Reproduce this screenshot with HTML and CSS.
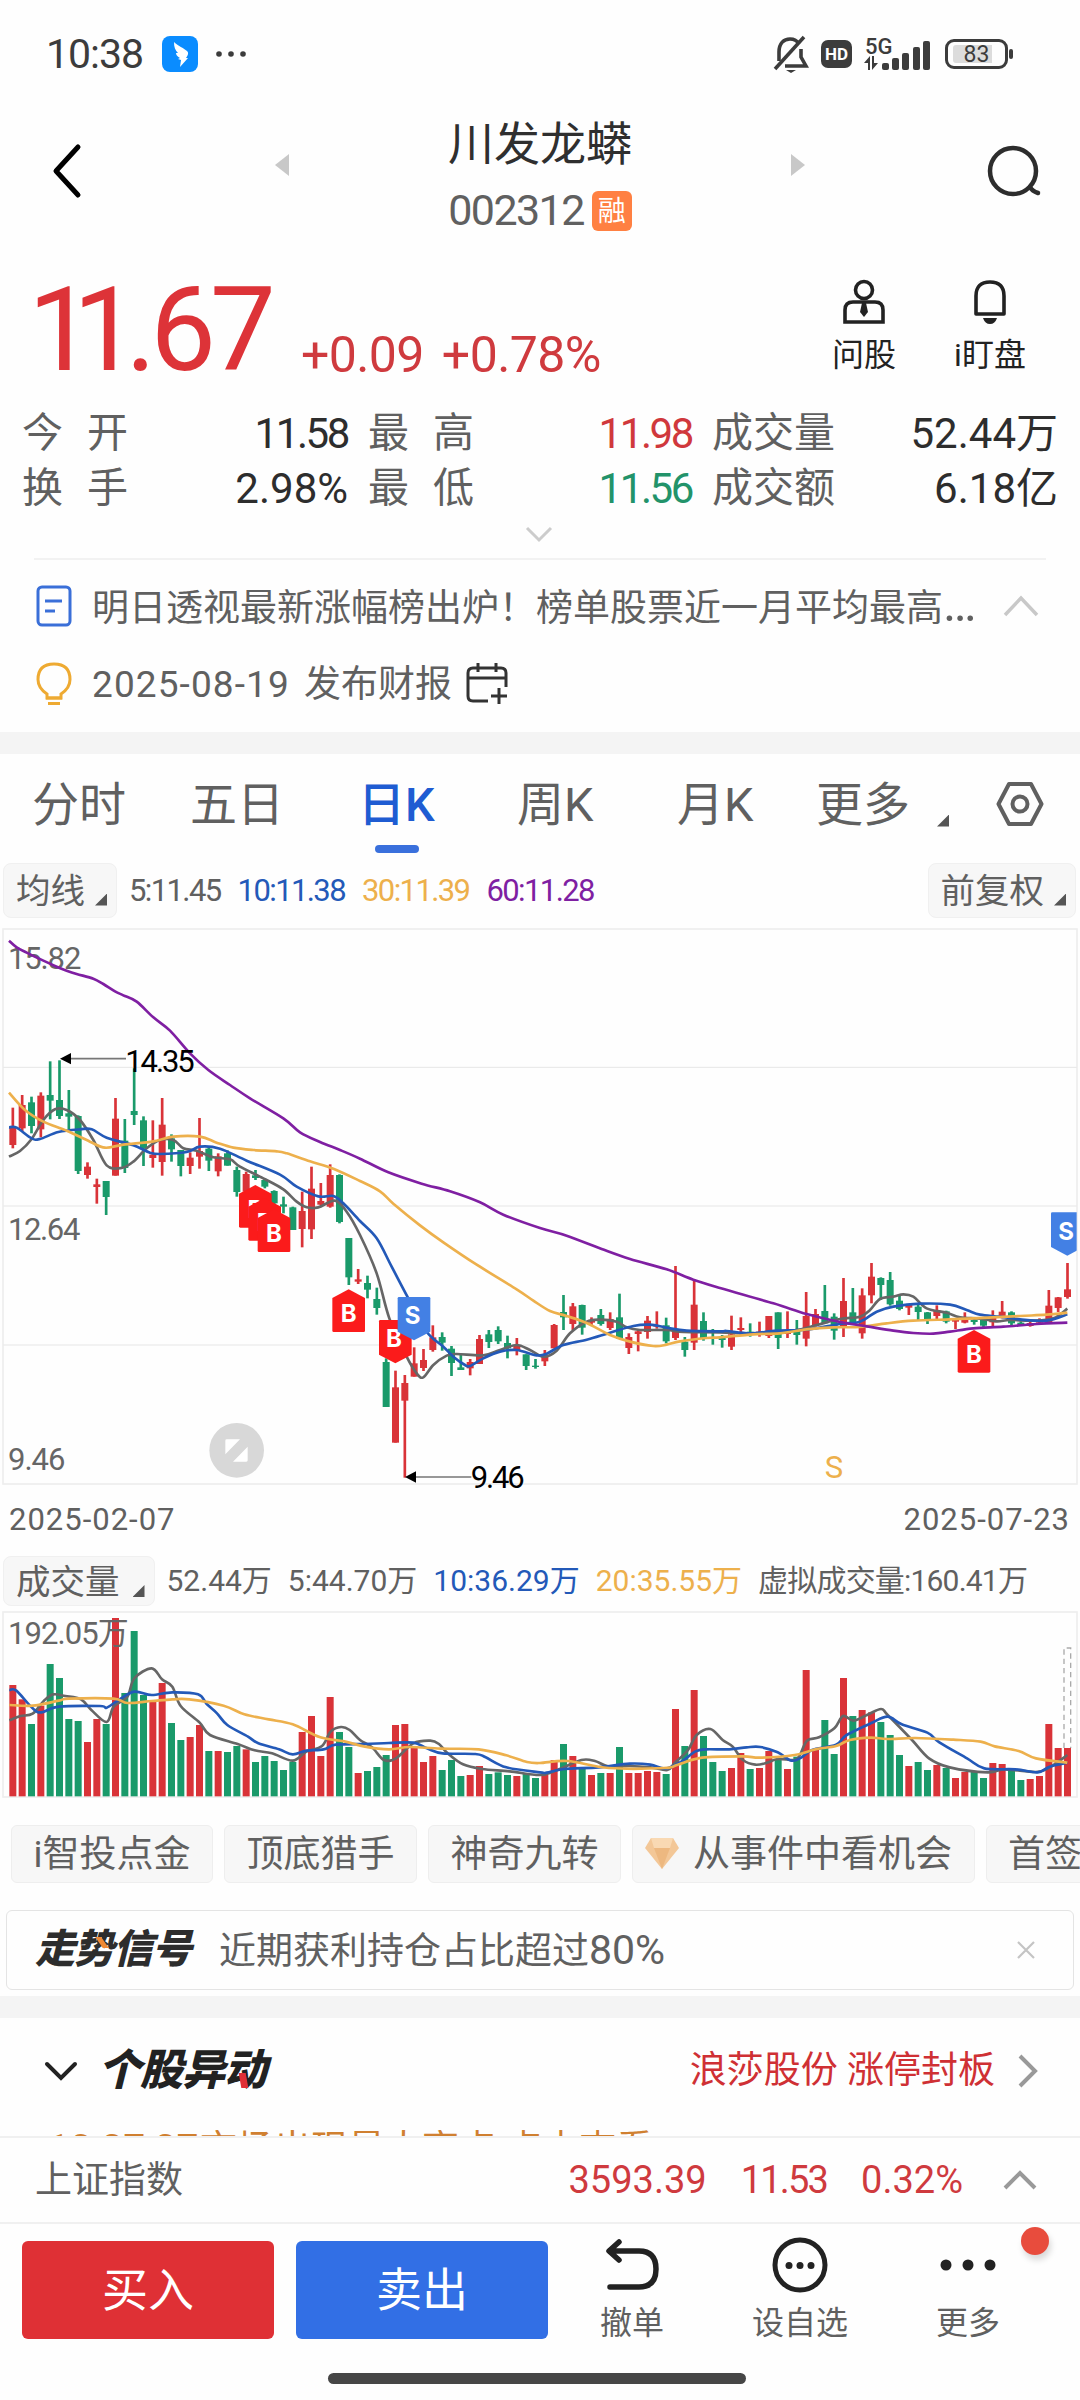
FILE: index.html
```html
<!DOCTYPE html>
<html lang="zh-CN">
<head>
  <meta charset="UTF-8">
  <meta name="viewport" content="width=device-width, initial-scale=1.0">
  <title>川发龙蟒 002312</title>
  <link rel="stylesheet" href="styles.css">
</head>
<body>

  <div class="status-bar">
    <span class="clock">10:38</span>
    <svg class="app-icon" width="36" height="36" viewBox="0 0 36 36">
      <rect width="36" height="36" rx="8" fill="#0a8cff"/>
      <path d="M12 6c3 3 11 7 13 9 2 2 1 4-1 7l2 0-8 9 1-7-3-1 2-1c-3-2-4-3-4-5l2 0c-3-3-4-6-4-11z" fill="#fff"/>
    </svg>
    <svg class="dots" width="32" height="8" viewBox="0 0 32 8" fill="#3c3c3c"><circle cx="4" cy="4" r="2.8"/><circle cx="16" cy="4" r="2.8"/><circle cx="28" cy="4" r="2.8"/></svg>
    <div class="status-right">
      <svg width="36" height="40" viewBox="0 0 36 40" fill="none" stroke="#3c3c3c" stroke-width="3.6">
        <path d="M6 27V18C6 9 11 5 17 5c4 0 7 1.500 9 5M28 15v8l5 9H12"/>
        <path d="M2 35L31 3"/><path d="M13 36h10l-5 3z" fill="#3c3c3c" stroke="none"/>
      </svg>
      <span class="hd">HD</span>
      <svg class="signal" width="68" height="36" viewBox="0 0 68 36" fill="#3c3c3c">
        <text x="1" y="18" class="five-g">5G</text>
        <path d="M4 34V27H0L6 20V34zM8 20h2v7h4L8 34z"/>
        <rect x="18" y="27" width="7" height="7" rx="2"/><rect x="28" y="22" width="7" height="12" rx="2"/><rect x="38" y="17" width="7" height="17" rx="2"/><rect x="49" y="11" width="7" height="23" rx="2"/><rect x="59" y="5" width="7" height="29" rx="2"/>
      </svg>
      <span class="battery"><i>83</i></span>
    </div>
  </div>

  <div class="title-bar">
    <svg class="back" width="30" height="56" viewBox="0 0 30 56" fill="none" stroke="#000" stroke-width="5" stroke-linecap="round" stroke-linejoin="round"><path d="M26 4L4 28l22 24"/></svg>
    <svg class="prev" width="14" height="22" viewBox="0 0 14 22"><path d="M14 0v22L0 11z" fill="#c8c8c8"/></svg>
    <div class="stock">
      <div class="stock-name">川发龙蟒</div>
      <div class="stock-code">002312<span class="tag">融</span></div>
    </div>
    <svg class="next" width="14" height="22" viewBox="0 0 14 22"><path d="M0 0v22l14-11z" fill="#c8c8c8"/></svg>
    <svg class="search" width="58" height="56" viewBox="0 0 58 56" fill="none" stroke="#2d2d2d" stroke-width="4.500" stroke-linecap="round"><circle cx="27" cy="27" r="23"/><path d="M44 43q2 4 8 6"/></svg>
  </div>

  <div class="price-row">
    <span class="price"><i>11</i>.67</span>
    <span class="change">+0.09</span>
    <span class="change">+0.78%</span>
    <div class="action ask">
      <svg width="44" height="46" viewBox="0 0 44 46" fill="none" stroke="#222" stroke-width="3.600"><circle cx="22" cy="11" r="8.500"/><path d="M3 43V31q0-8 8-8h22q8 0 8 8v12z"/><path d="M20 24h4l2 9-4 5-4-5z" fill="#222" stroke="none"/></svg>
      <span>问股</span>
    </div>
    <div class="action">
      <svg width="36" height="46" viewBox="0 0 36 46" fill="none" stroke="#222" stroke-width="3.600"><path d="M4 35V17q0-14 14-14t14 14v18z" stroke-linejoin="round"/><path d="M11 39h14q-2 6-7 6t-7-6z" fill="#222" stroke="none"/></svg>
      <span>i盯盘</span>
    </div>
  </div>

  <div class="quote">
    <span class="wide">今开</span><b class="n11">11.58</b>
    <span class="wide mid">最高</span><b class="up n11">11.98</b>
    <span class="last">成交量</span><b>52.44万</b>
    <span class="wide">换手</span><b>2.98%</b>
    <span class="wide mid">最低</span><b class="down n11">11.56</b>
    <span class="last">成交额</span><b>6.18亿</b>
  </div>
  <div class="expand">
    <svg width="28" height="18" viewBox="0 0 28 18" fill="none" stroke="#ccc" stroke-width="3"><path d="M2 2l12 12L26 2"/></svg>
  </div>

  <div class="news">
    <div class="news-row">
      <svg width="36" height="42" viewBox="0 0 36 42" fill="none" stroke="#3a6fd8" stroke-width="3"><rect x="2" y="2" width="32" height="38" rx="4"/><path d="M9 16h17M9 26h10"/></svg>
      <span class="headline">明日透视最新涨幅榜出炉！榜单股票近一月平均最高<i>…</i></span>
      <svg class="fold" width="36" height="22" viewBox="0 0 36 22" fill="none" stroke="#c8c8c8" stroke-width="3.500"><path d="M2 20L18 3l16 17"/></svg>
    </div>
    <div class="news-row">
      <svg width="36" height="44" viewBox="0 0 36 44" fill="none" stroke="#eeaa32" stroke-width="3"><path d="M11 36v-4Q2 26 2 17.500 2 2 18 2t16 15.500Q34 26 25 32v4z"/><path d="M10 36h16M12 41.500h12"/></svg>
      <span class="report">2025-08-19</span>
      <span>发布财报</span>
      <svg class="calendar" width="42" height="42" viewBox="0 0 42 42" fill="none" stroke="#333" stroke-width="3"><path d="M22 38H7q-5 0-5-5V10q0-5 5-5h28q5 0 5 5v14M2 15h38M12 0v9M30 0v9M33 25v16M25 33h16"/></svg>
    </div>
  </div>

  <div class="gap"></div>

  <div class="tabs">
    <span>分时</span>
    <span>五日</span>
    <span class="active">日K</span>
    <span>周K</span>
    <span>月K</span>
    <span class="more">更多<i class="corner"></i></span>
    <svg width="48" height="46" viewBox="0 0 48 46" fill="none" stroke="#606060" stroke-width="4"><path d="M13 3h22l10.500 20L35 43H13L2.500 23z" stroke-linejoin="round"/><circle cx="24" cy="23" r="7.500"/></svg>
  </div>

  <div class="legend ma">
    <span class="chip">均线<i class="corner"></i></span>
    <span class="g">5:11.45</span>
    <span class="b">10:11.38</span>
    <span class="o">30:11.39</span>
    <span class="p">60:11.28</span>
    <span class="chip right">前复权<i class="corner"></i></span>
  </div>

  <!-- three svg units to one pixel, origin at the chart's top margin -->
  <svg class="kline" id="kline" width="1080" height="572" viewBox="0 24 3240 1716"></svg>
  <div class="dates"><span>2025-02-07</span><span>2025-07-23</span></div>

  <div class="legend vol">
    <span class="chip">成交量<i class="corner"></i></span>
    <span class="g">52.44万</span>
    <span class="g">5:44.70万</span>
    <span class="b">10:36.29万</span>
    <span class="o">20:35.55万</span>
    <span class="g virtual">虚拟成交量:160.41万</span>
  </div>
  <svg class="volume" id="volume" width="1080" height="190" viewBox="0 210 3240 570"></svg>

  <div class="pills">
    <span>i智投点金</span>
    <span>顶底猎手</span>
    <span>神奇九转</span>
    <span class="gem"><svg width="34" height="31" viewBox="0 0 34 31"><path d="M6 0h22l6 10-17 21L0 10z" fill="#f3c797"/><path d="M6 0h22l-3 10H9z" fill="#f9d9b3"/><path d="M9 10h16l-8 21z" fill="#edb880"/></svg>从事件中看机会</span>
    <span>首签</span>
  </div>

  <div class="signal-card">
    <span class="logo">走势信号</span>
    <span>近期获利持仓占比超过<i>80%</i></span>
    <svg width="18" height="18" viewBox="0 0 18 18" stroke="#c4c4c4" stroke-width="2.200"><path d="M1 1l16 16M17 1L1 17"/></svg>
  </div>

  <div class="gap"></div>

  <div class="moves">
    <svg width="34" height="20" viewBox="0 0 34 20" fill="none" stroke="#222" stroke-width="4" stroke-linecap="round"><path d="M3 3l14 14L31 3"/></svg>
    <span class="logo red">个股异动</span>
    <span class="hot">浪莎股份 涨停封板</span>
    <svg width="20" height="34" viewBox="0 0 20 34" fill="none" stroke="#999" stroke-width="4"><path d="M2 2l15 15L2 32"/></svg>
  </div>
  <div class="ticker"><b>10:37:37</b><span>市场出现最大亮点 点击查看</span> <em>&gt;&gt;</em></div>

  <div class="index-bar">
    <span>上证指数</span>
    <b class="i1">3593.39</b><b class="i2">11.53</b><b class="i3">0.32%</b>
    <svg width="34" height="20" viewBox="0 0 34 20" fill="none" stroke="#999" stroke-width="4"><path d="M2 18L17 3l15 15"/></svg>
  </div>

  <div class="toolbar">
    <button class="buy">买入</button>
    <button class="sell">卖出</button>
    <div class="tool">
      <svg width="56" height="56" viewBox="0 0 56 56" fill="none" stroke="#222" stroke-width="5.500" stroke-linecap="round" stroke-linejoin="round"><path d="M15 5L5 14l10 9M6 14h29q17 0 17 18t-17 18H6"/></svg>
      <span>撤单</span>
    </div>
    <div class="tool">
      <svg width="56" height="56" viewBox="0 0 56 56"><circle cx="28" cy="28" r="25" fill="none" stroke="#222" stroke-width="5"/><g fill="#222"><circle cx="17" cy="28.500" r="3.500"/><circle cx="28" cy="28.500" r="3.500"/><circle cx="39" cy="28.500" r="3.500"/></g></svg>
      <span>设自选</span>
    </div>
    <div class="tool">
      <svg width="56" height="56" viewBox="0 0 56 56" fill="#222"><circle cx="6" cy="28" r="5.500"/><circle cx="28" cy="28" r="5.500"/><circle cx="50" cy="28" r="5.500"/></svg>
      <span>更多</span>
      <i class="badge"></i>
    </div>
  </div>
  <div class="home-bar"></div>

  <script src="script.js"></script>
</body>
</html>
```
FILE: styles.css
```css
* {
  box-sizing: border-box;
}

body {
  margin: 0;
  width: 1080px;
  height: 2400px;
  overflow: hidden;
  background-color: #fefefe;
  color: #606060;
  font-family: Roboto, "Noto Sans CJK SC", sans-serif;
  font-size: 37px;
  line-height: 1;
  white-space: nowrap;
}

svg {
  display: block;
  flex: none;
}

i, em {
  font-style: normal;
}

b {
  font-weight: normal;
}

/* status bar */
.status-bar {
  height: 108px;
  padding: 0 72px 0 46px;
  display: flex;
  align-items: center;
  color: #3c3c3c;
}

.clock {
  width: 116px;
  font-size: 41px;
  letter-spacing: -1px;
}

.dots {
  margin-left: 17px;
}

.status-right {
  margin-left: auto;
  display: flex;
  align-items: center;
}

.hd {
  width: 31px;
  height: 28px;
  margin-left: 12px;
  border-radius: 7px;
  background-color: #3c3c3c;
  color: #fff;
  font: bold 17px/28px Roboto, sans-serif;
  text-align: center;
}

.signal {
  margin-left: 12px;
}

.five-g {
  font: 500 22px Roboto, sans-serif;
}

.battery {
  position: relative;
  width: 63px;
  height: 30px;
  margin-left: 13px;
  padding: 3px 5px;
  border: 3px solid #3c3c3c;
  border-radius: 9px;
}

.battery::after {
  content: "";
  position: absolute;
  right: -8px;
  top: 7px;
  width: 4px;
  height: 10px;
  border-radius: 2px;
  background-color: #3c3c3c;
}

.battery i {
  display: block;
  height: 18px;
  border-radius: 3px;
  background: linear-gradient(to right, #dcdcdc 83%, #fefefe 83%);
  font-size: 23px;
  line-height: 19px;
  text-align: center;
}

/* title */
.title-bar {
  height: 152px;
  display: flex;
  align-items: flex-start;
}

.back {
  margin: 35px 0 0 52px;
}

.prev {
  margin: 46px 0 0 193px;
}

.stock {
  width: 502px;
  padding-top: 13px;
  text-align: center;
}

.stock-name {
  color: #2f2f2f;
  font-size: 46px;
}

.stock-code {
  margin-top: 22px;
  display: flex;
  justify-content: center;
  align-items: center;
  font-size: 43px;
  letter-spacing: -1.6px;
}

.tag {
  width: 40px;
  height: 40px;
  margin-left: 8px;
  border-radius: 6px;
  background-color: #ff8042;
  color: #fff;
  font-size: 28px;
  line-height: 41px;
  letter-spacing: 0;
}

.next {
  margin-top: 46px;
}

.search {
  margin: 36px 0 0 181px;
}

/* price */
.price-row {
  height: 140px;
  padding: 14px 35px 0 34px;
  display: flex;
  color: #cf3a3e;
}

.price {
  width: 267px;
  margin-top: -2px;
  color: #dd3338;
  font-size: 117px;
  letter-spacing: -6px;
}

.price i {
  margin: 0 8px 0 -6px;
  letter-spacing: -21px;
}

.change {
  margin: 56px 18px 0 0;
  font-size: 50px;
  line-height: 50px;
  letter-spacing: -0.6px;
}

.action {
  width: 110px;
  padding-top: 5px;
  display: flex;
  flex-direction: column;
  align-items: center;
  gap: 14px;
  color: #222;
  font-size: 32px;
}

.ask {
  margin-left: auto;
  margin-right: 16px;
}

/* quote table */
.quote {
  height: 110px;
  margin-top: 6px;
  padding: 0 22px;
  display: grid;
  grid-template-columns: 102px 224px 125px 219px 142px 224px;
  grid-template-rows: 55px 55px;
  align-items: center;
  font-size: 41px;
}

.quote .wide {
  letter-spacing: 24px;
}

.quote .mid {
  margin-left: 20px;
}

.quote .last {
  margin-left: 20px;
}

.quote b {
  color: #2d2d2d;
  font-size: 42px;
  text-align: right;
}

.quote .n11 {
  letter-spacing: -2.4px;
}

.quote .up {
  color: #d0383c;
}

.quote .down {
  color: #22936a;
}

.expand {
  height: 44px;
  margin: 0 34px;
  padding: 10px 0 0 491px;
  border-bottom: 2px solid #f2f2f2;
}

/* news */
.news {
  height: 172px;
  padding: 7px 36px 0;
}

.news-row {
  height: 78px;
  display: flex;
  align-items: center;
}

.headline {
  width: 890px;
  margin-left: 20px;
}

.headline i {
  letter-spacing: 2px;
  font-size: 50px;
  line-height: 37px;
}

.fold {
  margin-left: auto;
  margin-right: 5px;
}

.report {
  width: 212px;
  margin-left: 20px;
  letter-spacing: 1.1px;
}

.calendar {
  margin-left: 14px;
}

.gap {
  height: 22px;
  background-color: #f4f4f4;
}

/* period tabs */
.tabs {
  height: 108px;
  padding: 0 0 8px 32px;
  display: grid;
  grid-template-columns: 158px 168px 159px 160px 139px 180px 48px;
  align-items: center;
  font-size: 47px;
}

.tabs .active {
  position: relative;
  color: #1f5cd2;
  font-weight: 500;
}

.tabs .active::after {
  content: "";
  position: absolute;
  left: 17px;
  bottom: -25px;
  width: 44px;
  height: 8px;
  border-radius: 4px;
  background-color: #3a70dc;
}

.corner {
  display: inline-block;
  width: 12px;
  height: 12px;
  margin-left: 10px;
  background-color: #555;
  clip-path: polygon(100% 0, 100% 100%, 0 100%);
}

.tabs .corner {
  margin-left: 27px;
  margin-bottom: -6px;
}

.legend {
  display: flex;
  align-items: center;
  font-size: 31px;
}

.ma {
  height: 55px;
  padding: 1px 4px 0 3px;
  letter-spacing: -1.6px;
  gap: 17px;
}

.vol {
  height: 50px;
  padding-left: 3px;
  font-size: 30px;
  gap: 16px;
}

.chip {
  height: 55px;
  padding: 0 9px 0 12px;
  border: 1px solid #f0f0f0;
  border-radius: 8px;
  background-color: #f7f7f7;
  font-size: 34.5px;
  line-height: 55px;
  letter-spacing: 0;
}

.chip .corner {
  margin-bottom: -3px;
}

.ma .chip {
  margin-right: -5px;
}

.vol .chip {
  height: 50px;
  margin-right: -4px;
  line-height: 50px;
}

.vol .corner {
  margin-left: 13px;
}

.vol .virtual {
  letter-spacing: -0.8px;
}

.legend .chip.right {
  margin-left: auto;
  margin-right: 0;
}

.b { color: #2359b8; }
.o { color: #edb04c; }
.p { color: #7f1fa2; }

/* charts */
.kline {
  margin-top: 11px;
}

.kline text, .volume text {
  fill: #666;
  font-size: 93px;
}

.kline .extreme {
  fill: #000;
}

.kline .mark {
  fill: #fff;
  font: bold 72px Inter, sans-serif;
  text-anchor: middle;
}

.dates {
  height: 56px;
  padding: 4px 10px 0 9px;
  display: flex;
  justify-content: space-between;
  font-size: 31px;
  letter-spacing: 1px;
}

.volume {
  margin-top: 4px;
}

.pills {
  margin: 25px 0 27px;
  padding-left: 11px;
  display: flex;
  gap: 11px;
  overflow: hidden;
}

.pills span {
  height: 58px;
  padding: 0 21.5px;
  flex: none;
  border: 1px solid #eee;
  border-radius: 6px;
  background-color: #f7f7f7;
  line-height: 58px;
}

.pills .gem {
  padding-left: 12px;
  display: flex;
  gap: 14px;
}

.gem svg {
  margin-top: 12px;
}

.signal-card {
  height: 80px;
  margin: 0 6px 6px;
  padding: 0 38px 0 28px;
  display: flex;
  align-items: center;
  border: 1px solid #e4e4e4;
  border-radius: 6px;
}

.signal-card i {
  font-size: 41px;
}

.signal-card svg {
  margin-left: auto;
}

.logo {
  position: relative;
  width: 184px;
  font-size: 40px;
  font-weight: 900;
  font-style: italic;
  letter-spacing: -1px;
  color: #2d2d2d;
}

/* coloured slash that accents one stroke of the wordmark */
.logo::after {
  content: "";
  position: absolute;
  left: 64px;
  top: 7px;
  width: 6px;
  height: 11px;
  background-color: #ef8a35;
  transform: skewX(35deg);
}

.moves {
  height: 112px;
  padding: 0 42px 7px 44px;
  display: flex;
  align-items: center;
}

.moves .logo {
  margin-left: 20px;
  font-size: 43px;
  color: #222;
}

.logo.red::after {
  left: 142px;
  top: 24px;
  width: 7px;
  height: 15px;
  background-color: #e03036;
  transform: skewX(10deg);
}

.hot {
  margin-left: auto;
  margin-right: 23px;
  color: #cf3034;
}

.ticker {
  height: 6px;
  padding-left: 48px;
  overflow: hidden;
  color: #d08030;
  line-height: 40px;
}

/* the time is set larger than the message */
.ticker b {
  display: inline-block;
  width: 152px;
  font-size: 39px;
  line-height: 37px;
}

.ticker em {
  color: #999;
}

.index-bar {
  height: 88px;
  padding: 0 43px 0 35px;
  display: flex;
  align-items: center;
  border-top: 2px solid #f0f0f0;
  border-bottom: 2px solid #f0f0f0;
}

.index-bar b {
  color: #cf3a3e;
  font-size: 38px;
}

.i1 {
  margin-left: auto;
}

.i2 {
  margin: 0 34px 0 34px;
  letter-spacing: -1.8px;
}

.i3 {
  margin-right: 40px;
}

/* bottom toolbar */
.toolbar {
  height: 149px;
  padding: 17px 28px 0 22px;
  display: flex;
  align-items: flex-start;
}

.toolbar button {
  width: 252px;
  height: 98px;
  margin: 0 22px 0 0;
  padding: 0;
  border: none;
  border-radius: 6px;
  color: #fff;
  font-family: inherit;
  font-size: 46px;
  line-height: 98px;
}

.toolbar .buy {
  background-color: #df3035;
}

.toolbar .sell {
  margin-right: 0;
  background-color: #326fe5;
}

.tool {
  position: relative;
  width: 168px;
  margin-top: -4px;
  display: flex;
  flex-direction: column;
  align-items: center;
  gap: 14px;
  font-size: 32px;
}

.badge {
  position: absolute;
  right: 3px;
  top: -10px;
  width: 28px;
  height: 28px;
  border-radius: 50%;
  background-color: #e84c3d;
  box-shadow: 2px 5px 6px rgba(0, 0, 0, 0.15);
}

.home-bar {
  width: 418px;
  height: 11px;
  margin-left: 328px;
  border-radius: 6px;
  background-color: #464646;
}
```
FILE: script.js
```js
var RED = '#d93338';
var GREEN = '#1a9a6a';
var STEP = 28;
var FIRST = 38.5;

// direction, high, body top, body bottom, low
var candles = [
  'r 563 622 675 685', 'r 525 555 625 633', 'g 530 547 618 640', 'r 517 527 628 652', 'g 424 525 542 598',
  'g 421 540 588 597', 'g 510 580 590 628', 'g 586 588 753 762', 'r 727 740 765 776', 'r 776 793 801 851',
  'g 783 783 831 885', 'r 534 596 767 767', 'g 597 662 744 759', 'g 445 573 585 615', 'g 589 601 684 738',
  'r 601 704 714 743', 'r 534 614 726 767', 'g 643 655 688 725', 'g 690 690 738 769', 'r 697 713 738 762',
  'r 594 693 710 746', 'g 679 686 722 753', 'r 700 709 754 769', 'g 691 700 737 737', 'g 740 750 816 830',
  'r 755 762 815 830', 'g 750 766 774 780', 'g 775 780 800 805', 'g 811 813 850 855', 'g 830 853 860 880',
  'g 860 862 930 930', 'r 815 873 927 982', 'r 740 806 928 957', 'r 789 843 854 855', 'r 733 765 860 863',
  'g 763 765 906 910', 'g 954 954 1072 1095', 'r 1047 1078 1085 1092', 'g 1067 1089 1109 1135', 'g 1103 1137 1164 1184',
  'g 1315 1326 1461 1461', 'r 1352 1402 1568 1568', 'r 1365 1389 1442 1673', 'r 1282 1330 1370 1370', 'r 1287 1320 1344 1353',
  'r 1216 1252 1290 1295', 'g 1237 1251 1268 1292', 'g 1278 1286 1329 1368', 'g 1305 1342 1350 1350', 'r 1317 1326 1345 1366',
  'r 1245 1257 1332 1332', 'g 1230 1243 1266 1284', 'g 1219 1230 1264 1272', 'g 1247 1269 1285 1315', 'r 1254 1278 1292 1306',
  'g 1303 1303 1338 1350', 'g 1317 1337 1341 1346', 'r 1290 1308 1324 1338', 'r 1212 1215 1285 1285', 'g 1125 1176 1192 1230',
  'r 1149 1159 1212 1230', 'g 1154 1155 1223 1244', 'r 1192 1202 1208 1218', 'g 1167 1185 1212 1217', 'r 1177 1197 1224 1230',
  'g 1121 1192 1256 1256', 'r 1240 1251 1284 1302', 'r 1230 1234 1242 1294', 'r 1188 1202 1236 1256', 'r 1174 1215 1220 1226',
  'g 1193 1216 1264 1270', 'r 1038 1230 1254 1260', 'g 1251 1265 1290 1310', 'r 1078 1154 1268 1290', 'g 1177 1203 1254 1262',
  'g 1227 1230 1238 1274', 'g 1245 1250 1260 1283', 'r 1187 1243 1280 1290', 'r 1192 1224 1230 1245', 'g 1210 1235 1245 1250',
  'r 1205 1235 1245 1250', 'r 1188 1188 1248 1254', 'g 1177 1177 1254 1287', 'r 1174 1235 1242 1254', 'g 1200 1233 1245 1274',
  'r 1116 1188 1256 1279', 'r 1167 1182 1218 1220', 'g 1095 1173 1210 1212', 'g 1180 1190 1232 1259', 'r 1074 1143 1220 1251',
  'g 1104 1177 1210 1215', 'r 1105 1126 1240 1256', 'r 1029 1070 1126 1150', 'g 1072 1074 1095 1140', 'g 1056 1080 1153 1157',
  'g 1125 1142 1167 1171', 'r 1152 1155 1163 1185', 'g 1150 1160 1176 1200', 'g 1176 1177 1202 1212', 'r 1156 1170 1188 1200',
  'g 1172 1174 1205 1210', 'r 1195 1200 1205 1227', 'r 1177 1195 1208 1210', 'g 1195 1200 1206 1214', 'g 1195 1200 1217 1221',
  'r 1171 1190 1207 1220', 'r 1143 1175 1192 1195', 'g 1174 1177 1210 1218', 'g 1204 1208 1212 1214', 'r 1205 1209 1218 1220',
  'r 1195 1200 1208 1210', 'r 1110 1157 1210 1212', 'r 1131 1132 1164 1176', 'r 1029 1108 1131 1136'
];

var priceLines = {
  '#666666': '27,710 60,693 95,657 130,600 165,568 200,570 240,600 280,660 320,736 365,744 400,725 440,685 480,660 520,660 550,685 590,692 640,712 690,718 720,740 790,775 850,808 890,845 920,862 955,862 1005,842 1040,875 1080,945 1130,1060 1168,1195 1220,1310 1250,1360 1270,1372 1300,1335 1340,1307 1370,1302 1450,1306 1500,1290 1550,1275 1590,1290 1630,1310 1670,1292 1710,1240 1760,1205 1800,1199 1850,1205 1880,1222 1920,1230 2000,1230 2050,1236 2160,1237 2260,1240 2380,1232 2450,1215 2520,1197 2580,1190 2610,1170 2640,1137 2680,1130 2710,1123 2740,1130 2780,1165 2840,1178 2880,1192 2940,1196 2990,1204 3030,1200 3100,1202 3160,1195 3202,1166',
  '#2359b8': '27,622 50,623 95,655 120,657 175,636 240,628 275,628 320,653 400,676 450,698 480,702 560,696 600,680 660,686 740,722 840,764 890,800 955,829 1000,828 1030,850 1080,903 1130,955 1175,1040 1225,1135 1280,1235 1330,1280 1360,1310 1395,1335 1410,1338 1450,1315 1500,1295 1550,1290 1610,1306 1640,1301 1690,1275 1760,1259 1830,1238 1900,1218 1950,1214 2000,1223 2060,1232 2160,1234 2180,1233 2250,1240 2330,1232 2420,1229 2520,1212 2580,1205 2630,1175 2680,1160 2760,1151 2850,1154 2900,1170 2940,1184 3000,1190 3060,1198 3140,1202 3202,1183',
  '#edb04c': '27,518 75,570 130,605 200,632 270,665 315,683 370,674 460,664 520,650 600,650 650,668 700,683 760,690 830,694 860,700 930,724 1000,746 1080,783 1140,814 1180,851 1260,916 1330,967 1430,1034 1550,1108 1600,1142 1650,1173 1700,1188 1760,1209 1830,1245 1890,1265 1960,1278 2000,1274 2040,1264 2120,1254 2160,1252 2260,1243 2340,1240 2420,1228 2500,1222 2580,1221 2660,1210 2740,1202 2850,1198 2920,1195 3060,1188 3140,1184 3202,1178',
  '#7f1fa2': '27,62 50,82 80,98 130,122 170,140 200,152 230,162 280,176 310,192 345,214 370,226 410,245 460,292 510,332 570,400 625,450 690,495 750,535 850,595 900,637 960,666 1020,690 1080,716 1165,757 1265,791 1350,814 1440,847 1510,884 1620,924 1700,947 1805,987 1890,1017 2000,1048 2080,1079 2160,1104 2320,1150 2420,1182 2520,1206 2600,1219 2680,1232 2740,1239 2800,1241 2850,1235 2920,1225 3010,1220 3110,1212 3202,1208'
};

// top of each volume bar
var volumes = [
  435, 478, 552, 497, 372, 414, 537, 543, 606, 537, 552, 234, 459, 273, 465, 486, 429, 549, 600, 591,
  555, 633, 633, 636, 618, 628, 666, 648, 663, 690, 666, 576, 528, 648, 471, 576, 621, 699, 693, 681,
  645, 555, 552, 624, 666, 648, 690, 660, 708, 705, 678, 702, 697, 705, 708, 702, 714, 705, 660, 612,
  648, 684, 705, 699, 699, 621, 699, 699, 693, 696, 702, 507, 618, 450, 588, 666, 693, 684, 639, 687,
  684, 633, 660, 687, 650, 390, 628, 540, 642, 414, 528, 510, 517, 546, 585, 645, 678, 666, 690, 675,
  684, 714, 696, 696, 714, 669, 672, 690, 720, 717, 708, 552, 624, 624
];

var volumeLines = {
  '#666666': '28,541 62,528 98,521 134,480 160,463 196,468 243,478 274,510 320,546 341,500 382,470 403,415 455,385 486,418 517,440 542,498 599,548 630,585 713,612 764,631 816,640 878,662 919,635 966,618 992,575 1023,561 1049,570 1080,600 1116,622 1152,660 1188,655 1240,610 1291,602 1317,612 1343,640 1389,673 1446,687 1529,694 1620,705 1672,690 1744,660 1785,663 1827,680 1889,678 1951,682 2002,690 2023,670 2064,630 2090,585 2131,567 2168,600 2198,620 2229,660 2266,674 2302,668 2333,657 2384,660 2400,645 2421,602 2457,592 2503,565 2529,528 2560,542 2601,525 2643,507 2663,525 2736,600 2787,655 2849,682 2963,697 3015,688 3108,696 3149,682 3202,645',
  '#2359b8': '28,450 49,452 98,505 124,517 176,500 300,498 320,503 356,480 403,455 455,465 517,457 594,463 620,492 651,520 682,555 744,590 775,610 837,628 878,643 919,632 971,628 1007,614 1095,612 1167,609 1240,608 1281,625 1328,640 1426,642 1457,652 1519,682 1620,697 1640,698 1692,687 1796,682 1889,671 1951,674 1997,686 2044,665 2085,635 2116,628 2188,628 2240,622 2281,621 2333,637 2374,662 2405,652 2436,630 2508,614 2540,585 2612,550 2663,530 2705,553 2782,578 2818,607 2901,655 2953,685 3046,688 3113,697 3149,680 3202,668',
  '#edb04c': '28,495 98,497 176,482 207,476 341,476 382,489 455,483 517,478 568,478 671,497 733,523 806,538 878,553 961,592 1033,604 1095,620 1167,628 1229,621 1322,626 1436,628 1519,646 1581,666 1620,669 1703,663 1827,684 1992,684 2033,674 2106,653 2229,649 2281,653 2384,645 2446,628 2508,618 2550,600 2612,593 2663,597 2746,594 2860,599 2942,605 2984,619 3056,633 3108,655 3202,668'
};

function rect(x, y, w, h, fill) {
  return '<rect x="' + x + '" y="' + y + '" width="' + w + '" height="' + h + '" fill="' + fill + '"/>';
}

function hline(y) {
  return '<path d="M10 ' + y + 'H3230" stroke="#e6e6e6" stroke-width="3"/>';
}

function frame(top, bottom) {
  return '<rect x="9" y="' + top + '" width="3222" height="' + (bottom - top) + '" fill="none" stroke="#eee" stroke-width="5"/>';
}

// smooth line through the points
function curve(list, color) {
  var p = list.split(' ').map(function (s) { return s.split(',').map(Number); });
  var d = 'M' + p[0];
  for (var i = 0; i < p.length - 1; i++) {
    var a = p[i - 1] || p[i], b = p[i], c = p[i + 1], e = p[i + 2] || c;
    d += 'C' + [b[0] + (c[0] - a[0]) / 6, b[1] + (c[1] - a[1]) / 6,
      c[0] - (e[0] - b[0]) / 6, c[1] - (e[1] - b[1]) / 6, c[0], c[1]].join(' ');
  }
  return '<path d="' + d + '" fill="none" stroke="' + color + '" stroke-width="8"/>';
}

function curves(lines) {
  return Object.keys(lines).map(function (color) { return curve(lines[color], color); }).join('');
}

// trade flag, pointing up at a low or down at a high
function flag(x, top, letter, down, color) {
  var d = down
    ? 'M-49 4q0-4 4-4H45q4 0 4 4V104L0 130-49 104z'
    : 'M-49 26L0 0 49 26V124q0 4-4 4H-45q-4 0-4-4z';
  return '<g transform="translate(' + x + ' ' + top + ')"><path d="' + d + '" fill="' + color + '"/>' +
    '<text class="mark" x="' + (down ? -4 : 0) + '" y="' + (down ? 82 : 99) + '">' + letter + '</text></g>';
}

function drawKline() {
  var s = frame(27, 1692) + hline(442) + hline(858) + hline(1275);
  candles.forEach(function (row, i) {
    var c = row.split(' ');
    var color = c[0] === 'r' ? RED : GREEN;
    var x = FIRST + STEP * i;
    s += rect(x - 4, c[1], 8, c[4] - c[1], color);
    s += rect(x - 10.5, c[2], 21, Math.max(c[3] - c[2], 4), color);
  });
  s += '<text x="24" y="147" textLength="220">15.82</text>' +
    '<text x="24" y="960" textLength="217">12.64</text>' +
    '<text x="24" y="1650" textLength="172">9.46</text>';
  s += curves(priceLines);
  s += '<path d="M200 416H378M1240 1671H1414" stroke="#777" stroke-width="5"/>' +
    '<path d="M180 416l33-17v34zM1215 1671l33-17v34z"/>' +
    '<text class="extreme" x="376" y="456" textLength="208">14.35</text>' +
    '<text class="extreme" x="1412" y="1703" textLength="162">9.46</text>';
  s += flag(766, 795, 'B', false, '#fb1b1b') + flag(794, 834, 'B', false, '#fb1b1b') + flag(822, 868, 'B', false, '#fb1b1b');
  s += flag(1046, 1108, 'B', false, '#fb1b1b') + flag(1186, 1200, 'B', true, '#fb1b1b') + flag(1242, 1131, 'S', true, '#4380e4');
  s += flag(2922, 1230, 'B', false, '#fb1b1b');
  s += '<clipPath id="edge"><path d="M0 0H3230V1740H0z"/></clipPath><g clip-path="url(#edge)">' + flag(3202, 877, 'S', true, '#4380e4') + '</g>';
  s += '<circle cx="710" cy="1591" r="82" fill="#d8d8d8"/><path d="M680 1558h40l-44 45v-41q0-4 4-4zM743 1580v41q0 4-4 4h-40z" fill="#fff"/>';
  s += '<text x="2474" y="1673" style="fill:#edb04c">S</text>';
  document.getElementById('kline').innerHTML = s;
}

function drawVolume() {
  var s = frame(216, 771);
  volumes.forEach(function (y, i) {
    // bar takes the colour of its candle
    s += rect(FIRST - 10.5 + STEP * i, y, 21, 769 - y, candles[i][0] === 'r' ? RED : GREEN);
  });
  s += '<text x="24" y="311" textLength="362">192.05万</text>';
  s += '<path d="M3192 624V324H3212V624" fill="none" stroke="#aaa" stroke-width="4" stroke-dasharray="16 12"/>';
  document.getElementById('volume').innerHTML = s + curves(volumeLines);
}

drawKline();
drawVolume();
```
